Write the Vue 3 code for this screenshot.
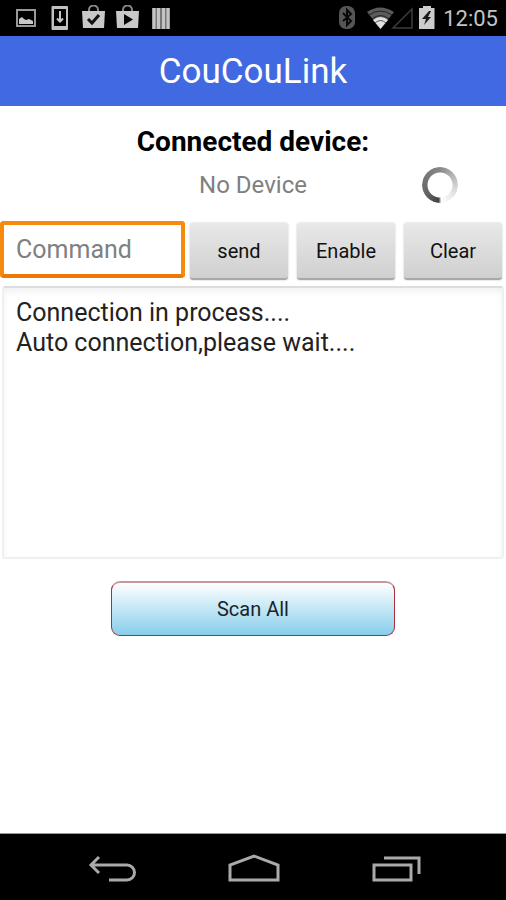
<script setup>
import { ref } from 'vue'

const command = ref('')
const log = ref('Connection in process....\nAuto connection,please wait....')

function send() {
  if (!command.value) return
  log.value += '\n' + command.value
  command.value = ''
}
function clearLog() {
  log.value = ''
}
</script>

<template>
  <div class="screen">
    <div class="status">
      <div class="notifications">
        <svg width="20" height="26" viewBox="0 0 20 26">
          <rect x="1" y="5" width="18" height="16" fill="none" stroke="#999" stroke-width="2" />
          <path d="M3 19V14l3-2 2 2 2 1 3-1 4 2v3z" fill="#c8c8c8" />
        </svg>
        <svg width="18" height="26" viewBox="0 0 18 26">
          <path fill-rule="evenodd" d="M1.500 1h14.500a1 1 0 0 1 1 1v22a1 1 0 0 1-1 1H1.500a1 1 0 0 1-1-1V2a1 1 0 0 1 1-1zM3 4v17h12V4z" fill="#c0c0c0" />
          <path d="M9 6v10M6 13.500l3 3 3-3" fill="none" stroke="#c8c8c8" stroke-width="2" />
        </svg>
        <div class="bags">
          <svg width="23" height="26" viewBox="0 0 23 26">
            <path d="M7 7V5a4.500 4.500 0 0 1 9 0v2" fill="none" stroke="#888" stroke-width="2" />
            <path d="M0 6h23l-1 17H1z" fill="#c8c8c8" />
            <path d="M6 14l4 4 7-8" fill="none" stroke="#111" stroke-width="3" />
          </svg>
          <svg width="23" height="26" viewBox="0 0 23 26">
            <path d="M7 7V5a4.500 4.500 0 0 1 9 0v2" fill="none" stroke="#888" stroke-width="2" />
            <path d="M0 6h23l-1 17H1z" fill="#c8c8c8" />
            <path d="M8 9l9 5.500-9 5.500z" fill="#050505" />
          </svg>
        </div>
        <svg width="18" height="26" viewBox="0 0 18 26">
          <path d="M0 3h18v21H0z" fill="#777" />
          <path d="M2 3v21M6.500 3v21M11.500 3v21M16 3v21" stroke="#c4c4c4" stroke-width="3" />
        </svg>
      </div>
      <div class="system">
        <svg class="bluetooth" width="16" height="24" viewBox="0 0 16 24">
          <rect width="16" height="23" rx="7" fill="#555" />
          <path d="M4 7l8 8-4 4V4l4 4-8 7" fill="none" stroke="#080808" stroke-width="2" />
        </svg>
        <svg width="46" height="24" viewBox="0 0 46 24">
          <path d="M0 6Q13-3 27 6L13.500 23z" fill="#5b5b5b" />
          <path d="M2 9Q13.500 1 25 9M5 13Q13.500 6 22 13" fill="none" stroke="#222" stroke-width="1" />
          <path d="M6 14Q13.500 8 21 14L13.500 23z" fill="#e0e0e0" />
          <path d="M8 17Q13.500 12 19 17" fill="none" stroke="#555" stroke-width="1" />
          <path d="M26 22L45 3v19z" fill="none" stroke="#3d3d3d" stroke-width="1.500" />
        </svg>
        <svg class="battery" width="16" height="24" viewBox="0 0 16 24">
          <path d="M4 0h8v2h3.500v21H0V2h4z" fill="#ccc" />
          <path d="M10 5L3 13h4l-2 6 7-8H9l3-6z" fill="#181818" />
        </svg>
        <time class="clock">12:05</time>
      </div>
    </div>

    <header class="bar"><h1>CouCouLink</h1></header>

    <main>
      <h2>Connected device:</h2>
      <div class="device">
        <span class="device-name">No Device</span>
        <span class="spinner" role="progressbar" aria-label="Connecting"></span>
      </div>

      <form class="controls" @submit.prevent="send">
        <input v-model="command" type="text" placeholder="Command" aria-label="Command" />
        <div class="buttons">
          <button type="submit">send</button>
          <button type="button">Enable</button>
          <button type="button" @click="clearLog">Clear</button>
        </div>
      </form>

      <textarea v-model="log" class="log" rows="8" readonly aria-label="Connection log"></textarea>

      <button type="button" class="scan">Scan All</button>
    </main>

    <nav class="nav">
      <button type="button" aria-label="Back">
        <svg width="48" height="30" viewBox="0 0 48 30">
          <path d="M11 3L3 11l8 8M3 11h36a7 7 0 0 1 0 15H21" fill="none" stroke="#aaa" stroke-width="3" />
        </svg>
      </button>
      <button type="button" aria-label="Home">
        <svg width="54" height="30" viewBox="0 0 54 30">
          <path d="M3 26V11L27 2l24 9v15z" fill="none" stroke="#aaa" stroke-width="3" />
        </svg>
      </button>
      <button type="button" aria-label="Recent apps">
        <svg width="50" height="30" viewBox="0 0 50 30">
          <path d="M2 11h37v15H2zM12 4h35v16" fill="none" stroke="#aaa" stroke-width="3" />
        </svg>
      </button>
    </nav>
  </div>
</template>

<style>
body {
  margin: 0;
  background: #fff;
}
</style>

<style scoped>
.screen {
  display: flex;
  flex-direction: column;
  min-height: 100vh;
  font-family: Roboto, "Liberation Sans", sans-serif;
  color: #000;
}
.status {
  display: flex;
  justify-content: space-between;
  align-items: center;
  height: 36px;
  padding: 0 8px 0 16px;
  background: #000;
}
.notifications {
  display: flex;
  align-items: center;
  gap: 13px;
}
.notifications > svg:first-child {
  margin-right: 2px;
}
.bags {
  display: flex;
  gap: 11px;
}
.system {
  display: flex;
  align-items: center;
}
.bluetooth {
  margin-right: 12px;
}
.battery {
  margin: 0 8px 0 6px;
}
.clock {
  padding-top: 2px;
  color: #c4c4c4;
  font-size: 22px;
  line-height: 34px;
}
.bar {
  background: #4169e1;
  color: #fff;
  text-align: center;
}
h1 {
  margin: 0;
  padding-top: 2px;
  font-size: 35px;
  font-weight: 400;
  line-height: 68px;
}
main {
  display: flex;
  flex: 1;
  flex-direction: column;
}
h2 {
  margin: 20px 0 0;
  font-size: 28px;
  font-weight: 700;
  line-height: 32px;
  text-align: center;
}
.device {
  display: grid;
  grid-template-columns: 1fr auto 1fr;
  align-items: center;
  height: 54px;
}
.device-name {
  grid-column: 2;
  color: #808080;
  font-size: 24px;
}
.spinner {
  justify-self: end;
  width: 36px;
  height: 36px;
  margin-right: 48px;
  border-radius: 50%;
  background: conic-gradient(#888, #bbb 60deg, #ddd 110deg, #fff 175deg, #444 185deg, #666 240deg, #888);
  -webkit-mask: radial-gradient(circle, transparent 12px, #000 13px);
  mask: radial-gradient(circle, transparent 12px, #000 13px);
}
.controls {
  display: grid;
  grid-template-columns: 185fr 312fr;
  gap: 5px;
  margin: 9px 4px 0 0;
}
input {
  box-sizing: border-box;
  width: 100%;
  height: 57px;
  padding: 0 12px;
  border: 4px solid #f58a0c;
  border-bottom-color: #ed7904;
  border-radius: 4px;
  outline: 0;
  background: #fff;
  font: 25px Roboto, sans-serif;
}
input::placeholder {
  color: #808080;
  opacity: 1;
}
.buttons {
  display: flex;
  gap: 9px;
  padding-top: 2px;
}
.buttons button {
  flex: 1 1 0;
  height: 57px;
  padding: 0;
  border: 0;
  border-bottom: 2px solid #a9a9a9;
  border-radius: 3px;
  background: linear-gradient(#e8e8e8, #d0d0d0);
  box-shadow: 0 0 2px #bbb;
  color: #111;
  font: 20px Roboto, sans-serif;
}
.log {
  box-sizing: border-box;
  margin: 6px 2px 0;
  height: 273px;
  padding: 10px 12px;
  border: 2px solid #f0f0f0;
  border-top-color: #ddd;
  border-radius: 3px;
  outline: 0;
  background: #fff;
  box-shadow: inset 0 4px 6px #f2f2f2;
  color: #222;
  font: 25px/30px Roboto, sans-serif;
  resize: none;
}
.scan {
  align-self: center;
  width: 56%;
  height: 55px;
  margin: 22px 0;
  border: 1px solid #a8303a;
  border-top: 2px solid #c49a9c;
  border-radius: 9px;
  background: linear-gradient(#fff, #87ceeb);
  color: #1a242a;
  font: 20px Roboto, sans-serif;
}
.nav {
  display: flex;
  justify-content: space-between;
  align-items: center;
  box-sizing: border-box;
  height: 67px;
  padding: 3px 84px 0 88px;
  border-top: 1px solid #999;
  background: #000;
}
.nav button {
  display: flex;
  padding: 0;
  border: 0;
  background: none;
}
</style>
